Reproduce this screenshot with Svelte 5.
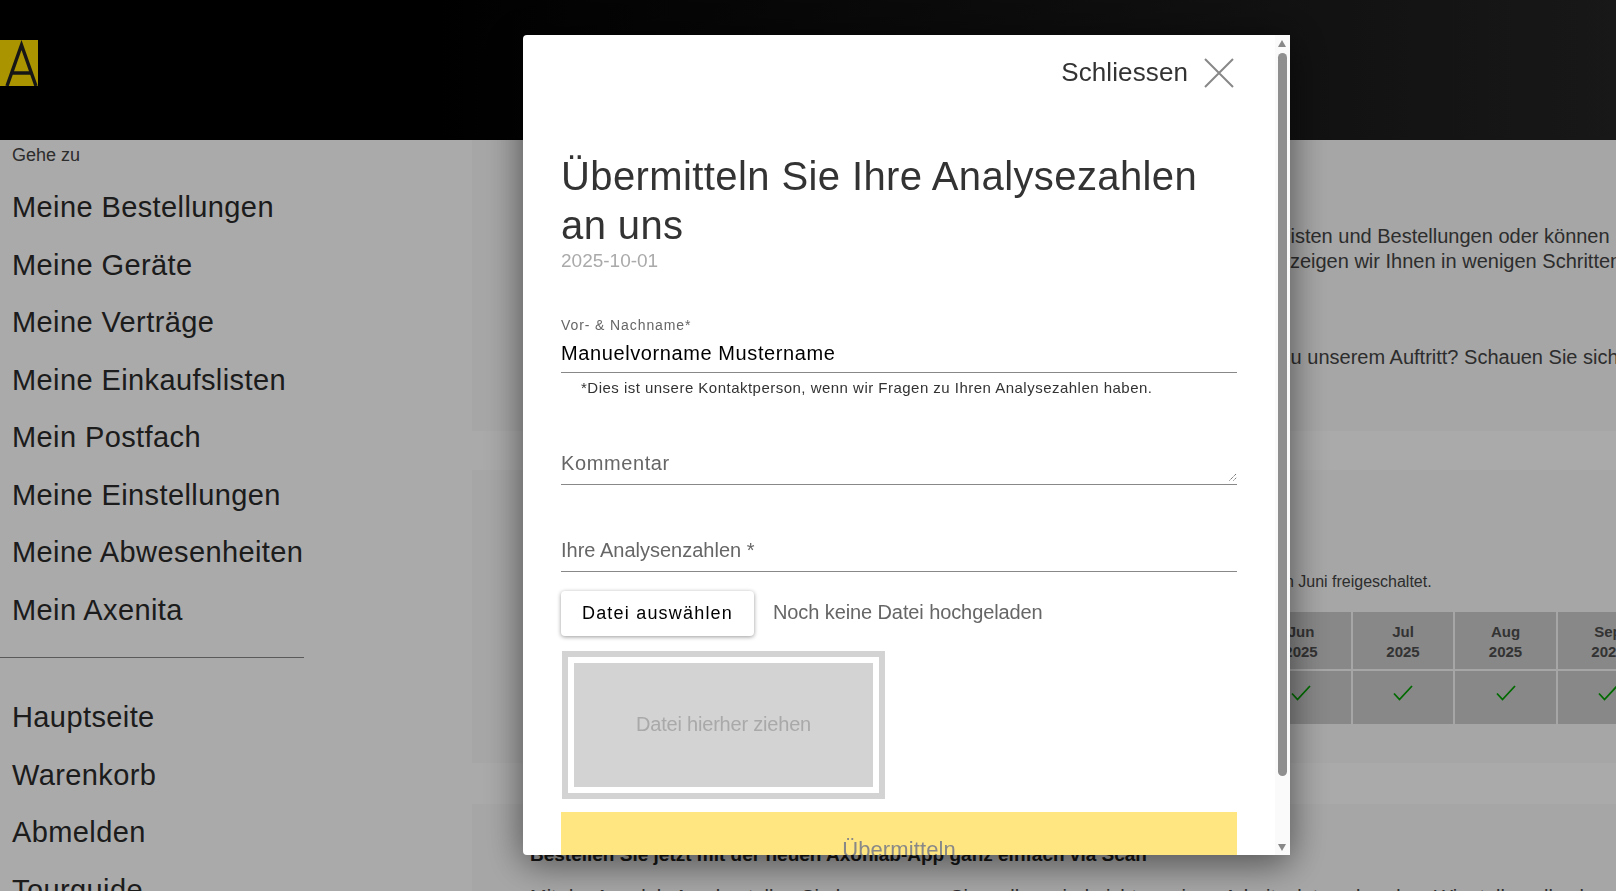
<script>
  const mainLinks = ['Meine Bestellungen', 'Meine Geräte', 'Meine Verträge', 'Meine Einkaufslisten', 'Mein Postfach', 'Meine Einstellungen', 'Meine Abwesenheiten', 'Mein Axenita'];
  const otherLinks = ['Hauptseite', 'Warenkorb', 'Abmelden', 'Tourguide'];
  const months = ['Jun', 'Jul', 'Aug', 'Sep', 'Okt'];
</script>

<div class="page">
  <header class="top">
    <div class="logo">
      <svg width="38" height="46" viewBox="0 0 38 46">
        <path d="M7 46 L21.5 5 L36 46 M12 33 H31" fill="none" stroke="#222" stroke-width="3.4" />
      </svg>
    </div>
  </header>

  <div class="content">
    <nav class="side">
      <div class="goto">Gehe zu</div>
      {#each mainLinks as link}
        <a class="nav-link" href="#top">{link}</a>
      {/each}
      <hr />
      {#each otherLinks as link}
        <a class="nav-link" href="#top">{link}</a>
      {/each}
    </nav>

    <main class="main">
      <section class="panel first">
        <p>Verwalten Sie hier Ihre Geräte, laufenden Verträge und Abwesenheiten, Ihre Einkaufslisten und Bestellungen oder können Ihre Daten ändern.</p>
        <p class="tour">Wie Sie die wichtigsten Funktionen des persönlichen Portales gut nutzen können, das zeigen wir Ihnen in wenigen Schritten im Tourguide.</p>
        <p class="spaced">Sind Sie neu oder haben Sie noch Fragen, Wünsche und Anmerkungen oder Ideen zu unserem Auftritt? Schauen Sie sich unsere Hilfe an.</p>
      </section>
      <section class="panel second">
        <p class="small">Um Ihre Analysezahlen zu übermitteln, wählen Sie den gewünschten Monat aus. Die Eingaben wurden von Juni freigeschaltet.</p>
        <div class="months">
          {#each months as m}
            <div class="cell head">{m}<br />2025</div>
          {/each}
          {#each months as m}
            <div class="cell">
              <svg width="20" height="16" viewBox="0 0 20 16">
                <path d="M1 8.5 L6.5 14.5 L19 1" fill="none" stroke="#00a000" stroke-width="1.8" />
              </svg>
            </div>
          {/each}
        </div>
      </section>
      <section class="panel third">
        <p class="bold">Bestellen Sie jetzt mit der neuen Axonlab-App ganz einfach via Scan</p>
        <p class="spaced-sm">Mit der Axonlab-App bestellen Sie bequem, wo Sie wollen, sind nicht an einen Arbeitsplatz gebunden. Wir stellen alles bereit.</p>
      </section>
    </main>
  </div>

  <div class="backdrop">
    <div class="modal">
      <div class="modal-body">
        <div class="close-row">
          <span>Schliessen</span>
          <svg width="30" height="30" viewBox="0 0 30 30">
            <path d="M1 1 L29 29 M29 1 L1 29" stroke="#888" stroke-width="2" fill="none" />
          </svg>
        </div>

        <h1>Übermitteln Sie Ihre Analysezahlen an uns</h1>
        <div class="date">2025-10-01</div>

        <div class="field name">
          <label for="fullname">Vor- &amp; Nachname*</label>
          <input id="fullname" value="Manuelvorname Mustername" />
        </div>
        <p class="hint">*Dies ist unsere Kontaktperson, wenn wir Fragen zu Ihren Analysezahlen haben.</p>

        <div class="field comment">
          <span>Kommentar</span>
          <svg class="grip" width="8" height="8" viewBox="0 0 8 8">
            <path d="M0.5 7.5 L7.5 0.5 M4.5 7.5 L7.5 4.5" stroke="#555" stroke-width="1" stroke-dasharray="1.2 0.8" />
          </svg>
        </div>

        <div class="field numbers"><span>Ihre Analysenzahlen *</span></div>

        <div class="upload-row">
          <button type="button" class="pick">Datei auswählen</button>
          <span>Noch keine Datei hochgeladen</span>
        </div>

        <div class="drop"><div class="drop-inner">Datei hierher ziehen</div></div>

        <button type="button" class="submit">Übermitteln</button>
      </div>

      <div class="scrollbar">
        <div class="arrow up"></div>
        <div class="track"><div class="thumb"></div></div>
        <div class="arrow down"></div>
      </div>
    </div>
  </div>
</div>

<style>
  :global(body) {
    margin: 0;
    overflow: hidden;
    font-family: "Liberation Sans", Arial, sans-serif;
  }
  .page {
    width: 1616px;
    height: 891px;
    overflow: hidden;
    background: #fff;
    color: #222;
  }
  .top {
    height: 140px;
    padding-top: 40px;
    box-sizing: border-box;
    background: linear-gradient(90deg, #000 25%, #242424 100%);
  }
  .logo {
    width: 38px;
    height: 46px;
    background: #ffe000;
  }
  .logo svg {
    display: block;
  }

  .content {
    display: flex;
  }
  .side {
    width: 472px;
    flex: none;
    padding-top: 5px;
    box-sizing: border-box;
  }
  .goto {
    padding-left: 12px;
    font-size: 18px;
    line-height: 20px;
    color: #444;
    margin-bottom: 22px;
  }
  .nav-link {
    display: block;
    padding-left: 12px;
    height: 57.5px;
    line-height: 40px;
    font-size: 29px;
    letter-spacing: 0.4px;
    color: #2a2a2a;
    text-decoration: none;
  }
  hr {
    width: 304px;
    margin: 10px 0 39px;
    border: 0;
    border-top: 1px solid #888;
  }

  .main {
    flex: 1;
    min-width: 0;
    font-size: 20px;
    color: #444;
  }
  .panel {
    background: #fafafa;
    padding-left: 58px;
    white-space: nowrap;
    overflow: hidden;
  }
  .panel p {
    margin: 0;
    line-height: 25px;
  }
  .first {
    height: 291px;
    padding-top: 84px;
    box-sizing: border-box;
    margin-bottom: 39px;
  }
  .tour {
    text-indent: -5px;
  }
  .spaced {
    margin-top: 71px !important;
    text-indent: 9px;
  }
  .second {
    height: 293px;
    padding-top: 99px;
    box-sizing: border-box;
    margin-bottom: 41px;
  }
  .small {
    font-size: 16px;
    text-indent: 6px;
  }
  .months {
    display: grid;
    grid-template-columns: 100px 100px 101px 100px 100px;
    grid-template-rows: 57px 53px;
    gap: 2px;
    margin: 18px 0 0 721px;
  }
  .cell {
    background: #cccccc;
    font-size: 15px;
    font-weight: 700;
    line-height: 19.5px;
    text-align: center;
    color: #4d4d4d;
    padding-top: 10px;
    box-sizing: border-box;
  }
  .cell svg {
    display: block;
    margin: 4px auto 0;
  }
  .third {
    padding-top: 38px;
    height: 200px;
    box-sizing: border-box;
  }
  .bold {
    font-size: 19px;
    font-weight: 700;
    color: #222;
  }
  .spaced-sm {
    margin-top: 18px !important;
  }

  .backdrop {
    position: fixed;
    inset: 0;
    background: rgba(0, 0, 0, 0.333);
  }
  .modal {
    position: absolute;
    left: 523px;
    top: 35px;
    width: 767px;
    height: 820px;
    display: flex;
    background: #fff;
    border-radius: 4px 0 0 4px;
    box-shadow: 0 8px 38px rgba(0, 0, 0, 0.55);
    overflow: hidden;
  }
  .modal-body {
    flex: 1;
    min-width: 0;
    padding: 0 38px;
    overflow: hidden;
  }
  .close-row {
    display: flex;
    justify-content: flex-end;
    align-items: center;
    gap: 16px;
    height: 30px;
    margin: 22px 3px 0 0;
    font-size: 26px;
    letter-spacing: 0.1px;
    color: #333;
  }
  .close-row svg {
    margin-top: 2px;
  }
  h1 {
    margin: 65px 0 0;
    font-size: 40px;
    letter-spacing: 0.4px;
    line-height: 49px;
    font-weight: 400;
    color: #333;
  }
  .date {
    font-size: 19px;
    line-height: 24px;
    color: #aaa;
    margin-top: -1px;
  }
  .field {
    position: relative;
    border-bottom: 1px solid #888;
    color: #666;
    font-size: 20px;
    letter-spacing: 0.6px;
  }
  .name {
    margin-top: 42px;
    height: 57px;
  }
  label {
    display: block;
    font-size: 14px;
    line-height: 20px;
    color: #666;
    letter-spacing: 0.9px;
  }
  input {
    display: block;
    width: 100%;
    height: 37px;
    padding: 0;
    border: 0;
    outline: 0;
    font: inherit;
    color: #000;
    letter-spacing: inherit;
    box-sizing: border-box;
  }
  .hint {
    margin: 5px 0 0 20px;
    font-size: 15px;
    line-height: 20px;
    letter-spacing: 0.48px;
    color: #333;
  }
  .comment {
    margin-top: 45px;
    height: 41px;
    line-height: 40px;
  }
  .grip {
    position: absolute;
    right: 0;
    bottom: 3px;
  }
  .numbers {
    margin-top: 45px;
    height: 41px;
    line-height: 40px;
    letter-spacing: 0;
  }
  .upload-row {
    display: flex;
    align-items: center;
    gap: 19px;
    margin-top: 19px;
    color: #666;
    font-size: 20px;
    letter-spacing: -0.1px;
  }
  .upload-row span {
    margin-top: -3px;
  }
  .pick {
    width: 193px;
    height: 45px;
    padding: 0;
    border: 0;
    border-radius: 4px;
    background: #fff;
    box-shadow: 0 1px 4px rgba(0, 0, 0, 0.4);
    font: inherit;
    font-size: 18px;
    letter-spacing: 1.2px;
    color: #000;
  }
  .drop {
    width: 323px;
    height: 148px;
    margin: 15px 0 0 1px;
    padding: 6px;
    border: 6px solid #d3d3d3;
    box-sizing: border-box;
  }
  .drop-inner {
    height: 100%;
    display: flex;
    align-items: center;
    justify-content: center;
    background: #d3d3d3;
    color: #a9a9a9;
    font-size: 20px;
    letter-spacing: -0.2px;
    padding-bottom: 2px;
    box-sizing: border-box;
  }
  .submit {
    display: block;
    width: 100%;
    height: 75px;
    margin-top: 13px;
    padding: 0;
    border: 0;
    background: #ffe680;
    color: #888;
    font: inherit;
    font-size: 22px;
    letter-spacing: 0.1px;
    text-align: center;
  }

  .scrollbar {
    width: 15px;
    flex: none;
    background: #fafafa;
    display: flex;
    flex-direction: column;
    align-items: center;
    box-sizing: border-box;
  }
  .arrow {
    flex: none;
    height: 17px;
    width: 9px;
    position: relative;
  }
  .arrow::after {
    content: "";
    position: absolute;
    left: 0;
    width: 0;
    height: 0;
    border-left: 4.5px solid transparent;
    border-right: 4.5px solid transparent;
  }
  .up::after {
    top: 5px;
    border-bottom: 7px solid #888;
  }
  .down::after {
    bottom: 4px;
    border-top: 7px solid #888;
  }
  .track {
    flex: 1;
    width: 9px;
    padding-top: 1px;
  }
  .thumb {
    height: 723px;
    border-radius: 5px;
    background: #8f8f8f;
  }
</style>
